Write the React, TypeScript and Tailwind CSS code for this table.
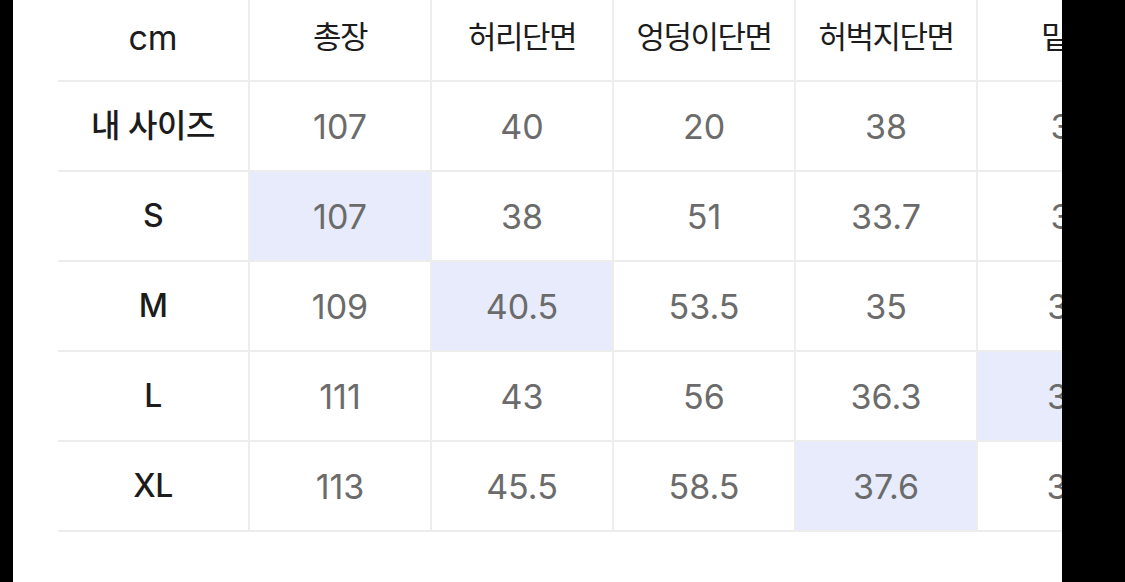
import React from 'react';

type Row = {
    label: string;
    values: string[];
    highlight: number | null;
};

const headers = ['총장', '허리단면', '엉덩이단면', '허벅지단면', '밑위'];

const rows: Row[] = [
    { label: '내 사이즈', values: ['107', '40', '20', '38', '31'], highlight: null },
    { label: 'S', values: ['107', '38', '51', '33.7', '31'], highlight: 0 },
    { label: 'M', values: ['109', '40.5', '53.5', '35', '32'], highlight: 1 },
    { label: 'L', values: ['111', '43', '56', '36.3', '33'], highlight: 4 },
    { label: 'XL', values: ['113', '45.5', '58.5', '37.6', '34'], highlight: 3 },
];

const font = { fontFamily: 'Inter, "Noto Sans CJK KR", "Noto Sans", sans-serif' };

export default function App() {
    return (
        <div className="flex h-[582px] w-[1125px] bg-black" style={font}>
            <div className="ml-[13px] w-[1049px] overflow-hidden bg-white pl-[45px]">
                <div className="grid w-max grid-cols-[192px_182px_182px_182px_182px_182px]">
                    <div className="flex h-[82px] items-center justify-center border-b-2 border-r-2 border-[#ededed] pb-[6px] text-[34px] text-[#1c1c1c]">
                        cm
                    </div>
                    {headers.map((h) => (
                        <div
                            key={h}
                            className="flex h-[82px] items-center justify-center border-b-2 border-r-2 border-[#ededed] pb-[6px] text-[31px] tracking-[-1.5px] text-[#1c1c1c]"
                        >
                            {h}
                        </div>
                    ))}

                    {rows.map((row) => (
                        <React.Fragment key={row.label}>
                            <div className="flex h-[90px] items-center justify-center border-b-2 border-r-2 border-[#ededed] text-[32px] font-medium tracking-[-0.5px] text-[#1c1c1c]">
                                {row.label}
                            </div>
                            {row.values.map((v, i) => (
                                <div
                                    key={i}
                                    className={`flex h-[90px] items-center justify-center border-b-2 border-r-2 border-[#ededed] text-[34px] text-[#6b6b6b] ${
                                        row.highlight === i ? 'bg-[#e7ebfb]' : 'bg-white'
                                    }`}
                                >
                                    {v}
                                </div>
                            ))}
                        </React.Fragment>
                    ))}
                </div>
            </div>
        </div>
    );
}
